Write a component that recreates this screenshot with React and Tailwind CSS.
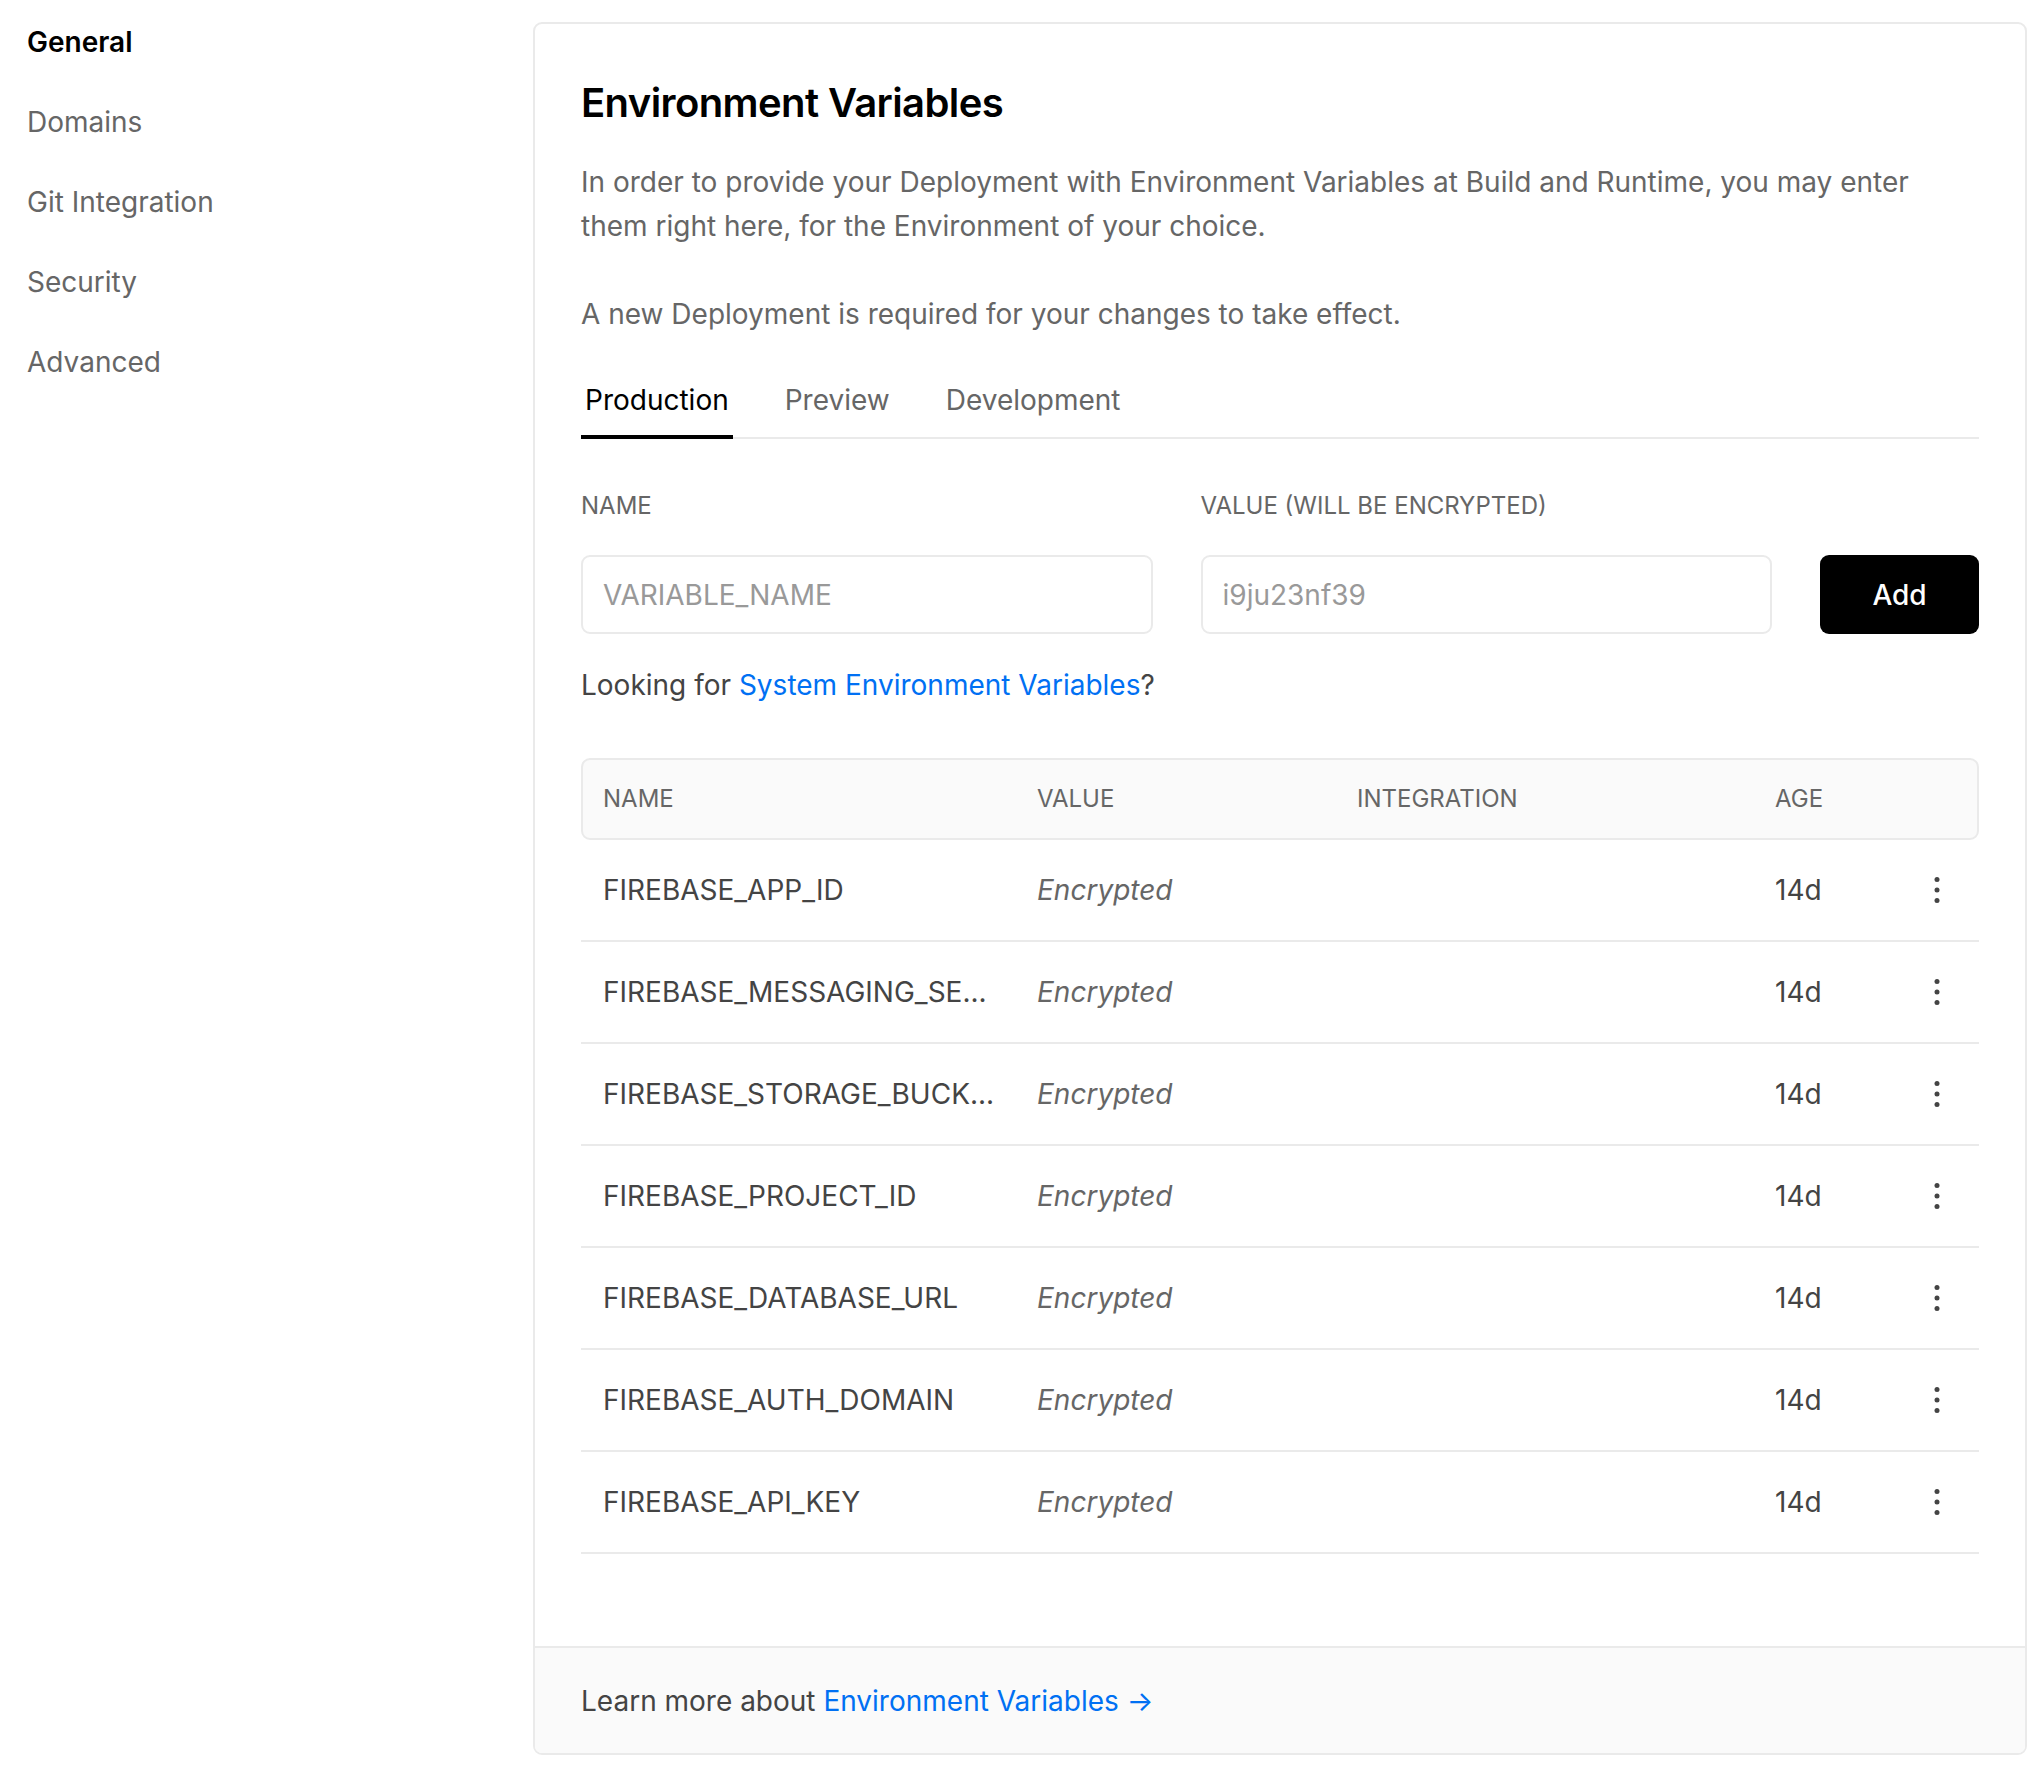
import React from 'react';

const navItems = ['General', 'Domains', 'Git Integration', 'Security', 'Advanced'];

const envVars = [
  'FIREBASE_APP_ID',
  'FIREBASE_MESSAGING_SE...',
  'FIREBASE_STORAGE_BUCK...',
  'FIREBASE_PROJECT_ID',
  'FIREBASE_DATABASE_URL',
  'FIREBASE_AUTH_DOMAIN',
  'FIREBASE_API_KEY',
];

const tabs = ['Production', 'Preview', 'Development'];

const DotsIcon = () => (
  <svg width="8" height="28" viewBox="0 0 8 28" fill="#444">
    <circle cx="4" cy="3.5" r="2.5" />
    <circle cx="4" cy="14" r="2.5" />
    <circle cx="4" cy="24.5" r="2.5" />
  </svg>
);

const App = () => {
  return (
    <div className="min-h-screen bg-white flex items-start pl-[27px] pt-[22px] pr-[17px] font-[Inter,sans-serif]">
      {/* Sidebar */}
      <nav className="w-[506px] shrink-0 flex flex-col gap-[40px]">
        {navItems.map((item, i) => (
          <a
            key={item}
            className={`text-[28px] leading-[40px] ${
              i === 0 ? 'font-semibold text-black' : 'text-[#666]'
            }`}
          >
            {item}
          </a>
        ))}
      </nav>

      {/* Card */}
      <div className="flex-1 border-2 border-[#eaeaea] rounded-[9px] overflow-hidden flex flex-col">
        <div className="px-[46px] pt-[53px] pb-[92px]">
          <h1 className="text-[40px] leading-[52px] font-semibold text-black tracking-[-0.015em]">
            Environment Variables
          </h1>
          <p className="mt-[31px] text-[28px] leading-[44px] text-[#666]">
            In order to provide your Deployment with Environment Variables at Build and Runtime, you may enter
            them right here, for the Environment of your choice.
          </p>
          <p className="mt-[44px] text-[28px] leading-[44px] text-[#666]">
            A new Deployment is required for your changes to take effect.
          </p>

          {/* Tabs */}
          <div className="mt-[44px] flex gap-[48px] border-b-2 border-[#eaeaea]">
            {tabs.map((tab, i) => (
              <div
                key={tab}
                className={`relative px-[4px] pb-[17px] text-[28px] leading-[40px] ${
                  i === 0 ? 'text-black' : 'text-[#666]'
                }`}
              >
                {tab}
                {i === 0 && (
                  <span className="absolute left-0 right-0 -bottom-[2px] h-[4px] bg-black" />
                )}
              </div>
            ))}
          </div>

          {/* Add form */}
          <div className="mt-[51px] grid grid-cols-[1fr_1fr_159px] gap-x-[48px] gap-y-[33px]">
            <label className="text-[24px] leading-[32px] text-[#666]">NAME</label>
            <label className="text-[24px] leading-[32px] text-[#666]">VALUE (WILL BE ENCRYPTED)</label>
            <div />
            <input
              placeholder="VARIABLE_NAME"
              className="h-[79px] border-2 border-[#eaeaea] rounded-[9px] px-[20px] text-[28px] text-black placeholder:text-[#999] outline-none"
            />
            <input
              placeholder="i9ju23nf39"
              className="h-[79px] border-2 border-[#eaeaea] rounded-[9px] px-[20px] text-[28px] text-black placeholder:text-[#999] outline-none"
            />
            <button className="h-[79px] bg-black text-white rounded-[9px] text-[28px] font-medium">
              Add
            </button>
          </div>

          <p className="mt-[29px] text-[28px] leading-[44px] text-[#444]">
            Looking for <a className="text-[#0070f3]">System Environment Variables</a>?
          </p>

          {/* Table */}
          <div className="mt-[51px]">
            <div className="h-[82px] bg-[#fafafa] border-2 border-[#eaeaea] rounded-[9px] grid grid-cols-[432px_320px_418px_1fr] items-center text-[24px] text-[#666]">
              <div className="pl-[20px]">NAME</div>
              <div className="pl-[22px]">VALUE</div>
              <div className="pl-[22px]">INTEGRATION</div>
              <div className="pl-[22px]">AGE</div>
            </div>
            {envVars.map((name) => (
              <div
                key={name}
                className="h-[102px] border-b-2 border-[#eaeaea] grid grid-cols-[434px_320px_418px_1fr_auto] items-center text-[28px]"
              >
                <div className="pl-[22px] text-[#444]">{name}</div>
                <div className="pl-[22px] italic text-[#666]">Encrypted</div>
                <div />
                <div className="pl-[22px] text-[#444]">14d</div>
                <button className="pr-[38px] flex items-center">
                  <DotsIcon />
                </button>
              </div>
            ))}
          </div>
        </div>

        {/* Footer */}
        <div className="h-[107px] border-t-2 border-[#eaeaea] bg-[#fafafa] px-[46px] flex items-center">
          <p className="text-[28px] leading-[44px] text-[#444]">
            Learn more about <a className="text-[#0070f3]">Environment Variables →</a>
          </p>
        </div>
      </div>
    </div>
  );
};

export default App;
